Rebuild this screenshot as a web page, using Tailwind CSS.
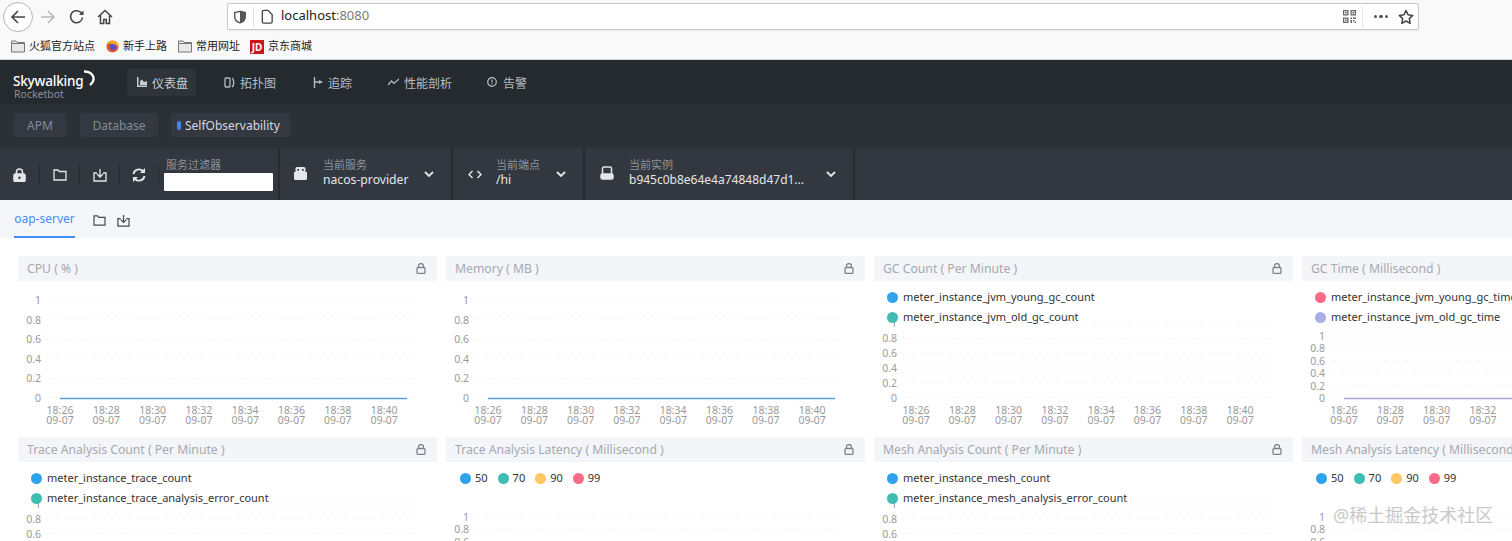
<!DOCTYPE html>
<html lang="en">
<head>
  <meta charset="UTF-8">
  <title>SkyWalking</title>
  <script src="https://cdn.jsdelivr.net/npm/@tailwindcss/browser@4"></script>
</head>
<body class="bg-white h-[541px] overflow-hidden relative font-['Noto_Sans','Noto_Sans_CJK_SC',sans-serif]">

  <!-- browser toolbar -->
  <div class="h-[33px] bg-[#f9f9fa] flex items-center">
    <div class="w-[30px] h-[30px] ml-[3px] rounded-full border border-[#b5b5b5] bg-white flex items-center justify-center text-[#444]">
      <svg class="w-4 h-4" viewBox="0 0 16 16" fill="none" stroke="currentColor" stroke-width="1.6"><path d="M15 8H2M8 2 2 8l6 6"/></svg>
    </div>
    <svg class="w-4 h-4 ml-[7px] text-[#b8b8b8]" viewBox="0 0 16 16" fill="none" stroke="currentColor" stroke-width="1.5"><path d="M1 8h13M8 2l6 6-6 6"/></svg>
    <svg class="w-4 h-4 ml-[13px] text-[#444]" viewBox="0 0 16 16" fill="none" stroke="currentColor" stroke-width="1.6"><path d="M13.5 8.5A6 6 0 1 1 11.5 3.2L14 5.5"/><path d="M14.5 1.5v4.5H10" fill="currentColor" stroke="none"/></svg>
    <svg class="w-4 h-4 ml-[12px] text-[#444]" viewBox="0 0 16 16" fill="none" stroke="currentColor" stroke-width="1.5"><path d="M1 8l7-6.5L15 8M3.5 6.5V14.5h3.2v-4h2.6v4h3.2V6.5"/></svg>
    <div class="ml-[114px] w-[1192px] h-[27px] bg-white border border-[#c8c8c8] rounded-[2px] flex items-center shadow-[0_1px_1px_rgba(0,0,0,0.06)]">
      <svg class="w-[14px] h-[14px] ml-[5px] text-[#555]" viewBox="0 0 16 16" fill="none" stroke="currentColor" stroke-width="1.6"><path d="M8 1.5 2 3v5c0 3.5 2.5 5.5 6 6.8 3.5-1.300 6-3.300 6-6.800V3z"/><path d="M8 1.500V14.800C11.500 13.500 14 11.500 14 8V3z" fill="currentColor" stroke="none"/></svg>
      <div class="w-px h-[20px] bg-[#e2e2e2] ml-[6px]"></div>
      <svg class="w-[14px] h-[15px] ml-[6px] text-[#444]" viewBox="0 0 14 16" fill="none" stroke="currentColor" stroke-width="1.4"><path d="M2 3a1.500 1.500 0 0 1 1.500-1.500H8L12.500 6v7.500A1.500 1.500 0 0 1 11 15H3.500A1.500 1.500 0 0 1 2 13.500z"/></svg>
      <span class="ml-[7px] text-[13px] leading-[18px] pb-[4px] text-[#222]">localhost<span class="text-[#7a7a7a]">:8080</span></span>
      <div class="ml-auto flex items-center">
        <svg class="w-[13px] h-[13px] text-[#666]" viewBox="0 0 13 13" fill="currentColor"><path fill-rule="evenodd" d="M0 0h5.500v5.500H0zM1.200 1.200v3h3v-3zM7.500 0H13v5.500H7.500zM8.700 1.200v3h3v-3zM0 7.500h5.500V13H0zM1.200 8.700v3h3v-3z"/><path d="M2 2h1.500v1.500H2zM9.500 2H11v1.500H9.500zM2 9.500h1.500V11H2zM7.500 7.500H9V9H7.500zM10 7.500h3V9h-3zM7.500 10H9v3H7.500zM10 10h1.500v1.500H10zM11.500 11.500H13V13h-1.500z"/></svg>
        <div class="w-px h-[22px] bg-[#e6e6e6] ml-[6px]"></div>
        <div class="flex gap-[2px] ml-[11px]">
          <span class="w-[3.500px] h-[3.500px] rounded-full bg-[#555]"></span>
          <span class="w-[3.500px] h-[3.500px] rounded-full bg-[#555]"></span>
          <span class="w-[3.500px] h-[3.500px] rounded-full bg-[#555]"></span>
        </div>
        <svg class="w-[16px] h-[16px] ml-[10px] mr-[4px] text-[#444]" viewBox="0 0 16 16" fill="none" stroke="currentColor" stroke-width="1.5" stroke-linejoin="round"><path d="m8 1.500 2 4.300 4.700.600-3.400 3.200.900 4.700L8 12l-4.200 2.300.900-4.700L1.300 6.400 6 5.800z"/></svg>
      </div>
    </div>
  </div>

  <!-- bookmarks -->
  <div class="h-[27px] bg-[#f9f9fa] border-b border-[#d0d0d0] flex items-center text-[11px] text-[#222] pl-[11px] pt-[1px]">
    <svg class="w-[14px] h-[13px] text-[#777]" viewBox="0 0 14 13"><path d="M.5 1h4.500l1.500 1.500h7V12H.5z" fill="#e8e8e8" stroke="currentColor"/><path d="M.5 3.500h13" stroke="currentColor"/></svg>
    <span class="ml-[4px] w-[77px]">火狐官方站点</span>
    <svg class="w-[13px] h-[13px]" viewBox="0 0 14 14"><circle cx="7" cy="7" r="6.500" fill="#e8572a"/><circle cx="7.500" cy="7.500" r="3.600" fill="#5b4bc4"/><path d="M1 4c2-3.500 7-4 10-2 2 1.500 3 4 2.500 6L11 5.500 7 4z" fill="#f9a825"/></svg>
    <span class="ml-[4px] w-[55px]">新手上路</span>
    <svg class="w-[14px] h-[13px] text-[#777]" viewBox="0 0 14 13"><path d="M.5 1h4.500l1.500 1.500h7V12H.5z" fill="#e8e8e8" stroke="currentColor"/><path d="M.5 3.500h13" stroke="currentColor"/></svg>
    <span class="ml-[4px] w-[54px]">常用网址</span>
    <span class="w-[14px] h-[14px] bg-[#c8161d] text-white text-[10px] leading-[14px] text-center font-bold">JD</span>
    <span class="ml-[4px]">京东商城</span>
  </div>

  <!-- app nav -->
  <div class="h-[44px] bg-[#252a2f] flex items-center text-[12px] text-[#b9bdc3]">
    <div class="w-[127px] h-full relative shrink-0">
      <span class="absolute left-[13px] top-[11px] text-[13.500px] leading-[20px] font-medium text-white tracking-[-0.2px]">Skywalking</span>
      <svg class="absolute left-[83px] top-[10px] w-[13px] h-[16px]" viewBox="0 0 13 16" fill="none" stroke="white" stroke-width="2.400"><path d="M1 1.500C7 1 11 5 10.500 10 10 12 9 13.500 7 15"/></svg>
      <span class="absolute left-[14px] top-[27px] text-[10.500px] leading-[14px] text-[#8b9097]">Rocketbot</span>
    </div>
    <div class="w-[69px] h-[27px] bg-[#2f343b] rounded-[3px] flex items-center pl-[10px] text-[#c9ccd1]">
      <svg class="w-[10px] h-[10px]" viewBox="0 0 10 10" fill="currentColor"><path d="M0 0h1.500v8.500H10V10H0zM3 8V4l2-1.500L7 5l3-1v4z"/></svg>
      <span class="ml-[5px] pt-[4px]">仪表盘</span>
    </div>
    <svg class="w-[11px] h-[11px] ml-[28px]" viewBox="0 0 11 11" fill="none" stroke="currentColor" stroke-width="1.300"><rect x="1" y="1" width="5" height="9" rx="1"/><path d="M8 1c2 1 2.500 8 0 9"/></svg>
    <span class="ml-[5px] pt-[4px]">拓扑图</span>
    <svg class="w-[10px] h-[11px] ml-[37px]" viewBox="0 0 10 11" fill="none" stroke="currentColor" stroke-width="1.400"><path d="M1.500 0v11M1.500 5H6"/><path d="M6 3l4 2-4 2z" fill="currentColor" stroke="none"/></svg>
    <span class="ml-[5px] pt-[4px]">追踪</span>
    <svg class="w-[11px] h-[8px] ml-[36px]" viewBox="0 0 11 8" fill="none" stroke="currentColor" stroke-width="1.200"><path d="M0 7l3.500-4 2.500 2.500L11 1"/></svg>
    <span class="ml-[5px] pt-[4px]">性能剖析</span>
    <svg class="w-[10px] h-[10px] ml-[35px]" viewBox="0 0 10 10" fill="none" stroke="currentColor" stroke-width="1.200"><circle cx="5" cy="5" r="4.300"/><path d="M5 2.500v3"/><path d="M5 6.500v1"/></svg>
    <span class="ml-[6px] pt-[4px]">告警</span>
  </div>

  <!-- template tabs -->
  <div class="h-[44px] bg-[#2c3138] flex items-start pt-[9px] pl-[14px] text-[12px]">
    <div class="w-[52px] h-[24px] bg-[#343941] rounded-[3px] flex items-center justify-center pt-[2px] text-[#858b93]">APM</div>
    <div class="w-[78px] h-[24px] bg-[#343941] rounded-[3px] flex items-center justify-center pt-[2px] text-[#858b93] ml-[14px]">Database</div>
    <div class="w-[119px] h-[24px] bg-[#343941] rounded-[3px] flex items-center text-[#d5d8dc] ml-[13px] pl-[4px]">
      <span class="w-[4px] h-[9px] rounded-full bg-[#3d87f5] ml-[2px]"></span>
      <span class="ml-[4px] pt-[2px]">SelfObservability</span>
    </div>
  </div>

  <!-- service toolbar -->
  <div class="h-[52px] bg-[#333840] flex text-[#e4e6e9] text-[12px]">
    <div class="w-[280px] h-full border-r-2 border-[#282c32] flex items-center relative shrink-0">
      <div class="w-[39px] flex justify-center pt-[2px]">
        <svg class="w-[13px] h-[14px]" viewBox="0 0 13 14" fill="none" stroke="currentColor" stroke-width="1.600"><path d="M3.500 6V4a3 3 0 0 1 6 0v2"/><rect x="1" y="6" width="11" height="7.500" rx="1.500" fill="currentColor"/><circle cx="6.500" cy="9.800" r="1.200" fill="#333840" stroke="none"/></svg>
      </div>
      <div class="w-px h-[20px] bg-[#282c32]"></div>
      <div class="w-[39px] flex justify-center pt-[2px]">
        <svg class="w-[14px] h-[12px]" viewBox="0 0 14 12" fill="none" stroke="currentColor" stroke-width="1.300"><path d="M1 1h4l1.200 1.500H13V11H1z"/></svg>
      </div>
      <div class="w-px h-[20px] bg-[#282c32]"></div>
      <div class="w-[39px] flex justify-center pt-[2px]">
        <svg class="w-[14px] h-[14px]" viewBox="0 0 14 14" fill="none" stroke="currentColor" stroke-width="1.300"><path d="M7 1v8M4 6l3 3 3-3M4 5H1v8h12V5h-3"/></svg>
      </div>
      <div class="w-px h-[20px] bg-[#282c32]"></div>
      <div class="w-[38px] flex justify-center pt-[2px]">
        <svg class="w-[14px] h-[14px]" viewBox="0 0 14 14" fill="none" stroke="currentColor" stroke-width="1.900"><path d="M1.500 6A5.500 5.500 0 0 1 11 3.200M12.500 8A5.500 5.500 0 0 1 3 10.800"/><path d="M13 0v5H8zM1 14V9h5z" fill="currentColor" stroke="none"/></svg>
      </div>
      <div class="w-px h-[20px] bg-[#282c32]"></div>
      <div class="ml-[5px]">
        <div class="text-[11px] leading-[15px] text-[#8f949b] pl-[2px]">服务过滤器</div>
        <div class="w-[109px] h-[18px] bg-white rounded-[1px] mt-[1px]"></div>
      </div>
    </div>

    <div class="w-[173px] h-full border-r-2 border-[#282c32] flex items-center shrink-0">
      <div class="w-[43px] flex justify-center pb-[1px] pr-[2px]">
        <svg class="w-[13px] h-[13px]" viewBox="0 0 13 13" fill="currentColor"><path d="M3 0h7a1.500 1.500 0 0 1 1.500 1.500V5H13v6.500a1.500 1.500 0 0 1-1.500 1.500h-10A1.500 1.500 0 0 1 0 11.500V5h1.500V1.500A1.500 1.500 0 0 1 3 0zm.3 2v1.800H5V2zm4.700 0v1.800h1.700V2z" fill-rule="evenodd"/></svg>
      </div>
      <div class="w-[106px] pb-[4px]">
        <div class="text-[11px] leading-[15px] text-[#8f949b]">当前服务</div>
        <div class="text-[12.200px] leading-[15px]">nacos-provider</div>
      </div>
      <svg class="w-[10px] h-[7px] -ml-[5px]" viewBox="0 0 10 7" fill="none" stroke="currentColor" stroke-width="1.800"><path d="m1 1 4 4 4-4"/></svg>
    </div>

    <div class="w-[132px] h-full border-r-2 border-[#282c32] flex items-center shrink-0">
      <div class="w-[43px] flex justify-center">
        <svg class="w-[14px] h-[9px]" viewBox="0 0 14 9" fill="none" stroke="currentColor" stroke-width="1.500"><path d="M4.500 1 1 4.500 4.500 8M9.500 1 13 4.500 9.500 8"/></svg>
      </div>
      <div class="w-[60px] pb-[4px]">
        <div class="text-[11px] leading-[15px] text-[#8f949b]">当前端点</div>
        <div class="text-[12.200px] leading-[15px]">/hi</div>
      </div>
      <svg class="w-[10px] h-[7px]" viewBox="0 0 10 7" fill="none" stroke="currentColor" stroke-width="1.800"><path d="m1 1 4 4 4-4"/></svg>
    </div>

    <div class="w-[270px] h-full border-r-2 border-[#282c32] flex items-center shrink-0">
      <div class="w-[44px] flex justify-center pb-[2px]">
        <svg class="w-[14px] h-[14px]" viewBox="0 0 14 14" fill="none" stroke="currentColor" stroke-width="1.500"><path d="M2.500 8V2.500a1.500 1.500 0 0 1 1.500-1.500h6a1.500 1.500 0 0 1 1.500 1.500V8"/><rect x="1" y="8" width="12" height="5" rx="1.500" fill="currentColor"/></svg>
      </div>
      <div class="w-[195px] pb-[4px]">
        <div class="text-[11px] leading-[15px] text-[#8f949b]">当前实例</div>
        <div class="text-[12px] leading-[15px] whitespace-nowrap">b945c0b8e64e4a74848d47d1...</div>
      </div>
      <svg class="w-[10px] h-[7px] ml-[2px]" viewBox="0 0 10 7" fill="none" stroke="currentColor" stroke-width="1.800"><path d="m1 1 4 4 4-4"/></svg>
    </div>
  </div>

  <!-- dashboard tabs -->
  <div class="h-[38px] bg-[#f5f6fa] flex pl-[14px] text-[12px] text-[#448dfe]">
    <div class="h-full border-b-2 border-[#448dfe] pt-[10px] leading-[18px] w-[61px] text-center">oap-server</div>
    <svg class="w-[13px] h-[11px] ml-[18px] mt-[15px] text-[#444a52]" viewBox="0 0 14 12" fill="none" stroke="currentColor" stroke-width="1.300"><path d="M1 1h4l1.200 1.500H13V11H1z"/></svg>
    <svg class="w-[13px] h-[13px] ml-[11px] mt-[14px] text-[#444a52]" viewBox="0 0 14 14" fill="none" stroke="currentColor" stroke-width="1.300"><path d="M7 1v8M4 6l3 3 3-3M4 5H1v8h12V5h-3"/></svg>
  </div>

  <!-- chart grid -->
  <div id="grid" class="grid grid-cols-[repeat(4,419px)] auto-rows-[181px] gap-x-[9px] pl-[18px] pt-[18px] w-[1800px]"></div>

  <!-- watermark -->
  <div class="absolute left-[1333px] top-[503px] text-[18px] leading-[24px] text-[#c9c9c9] whitespace-nowrap">@稀土掘金技术社区</div>

  <script>
    const BLUE = "#2fa3ec", TEAL = "#3fbdb3", YELLOW = "#ffc75f", RED = "#fb6b85", PURPLE = "#a9afe6";
    const TIMES = ["18:26","18:28","18:30","18:32","18:34","18:36","18:38","18:40"];
    const PCT = [["50",BLUE],["70",TEAL],["90",YELLOW],["99",RED]];

    // top = y of the "1" tick, measured from the card's top edge; "0" always sits at 142
    const charts = [
      { title: "CPU ( % )", top: 44, line: "#5b9fdc" },
      { title: "Memory ( MB )", top: 44, line: "#5b9fdc" },
      { title: "GC Count ( Per Minute )", top: 67, legend: [["meter_instance_jvm_young_gc_count",BLUE],["meter_instance_jvm_old_gc_count",TEAL]] },
      { title: "GC Time ( Millisecond )", top: 80, line: "#a6a6d6", legend: [["meter_instance_jvm_young_gc_time",RED],["meter_instance_jvm_old_gc_time",PURPLE]] },
      { title: "Trace Analysis Count ( Per Minute )", top: 67, legend: [["meter_instance_trace_count",BLUE],["meter_instance_trace_analysis_error_count",TEAL]] },
      { title: "Trace Analysis Latency ( Millisecond )", top: 80, row: PCT },
      { title: "Mesh Analysis Count ( Per Minute )", top: 67, legend: [["meter_instance_mesh_count",BLUE],["meter_instance_mesh_analysis_error_count",TEAL]] },
      { title: "Mesh Analysis Latency ( Millisecond )", top: 80, row: PCT }
    ];

    function chartSvg(c) {
      let s = "";
      const step = (142 - c.top) / 5;
      ["1","0.8","0.6","0.4","0.2","0"].forEach((t, i) => {
        const y = c.top + step * i;
        s += `<line x1="28" x2="398" y1="${y}" y2="${y}" stroke="#f7f7f7" stroke-dasharray="6 3"/>`;
        s += `<text x="23" y="${y + 4}" text-anchor="end" font-size="10.5" fill="#9a9a9a">${t}</text>`;
      });
      TIMES.forEach((t, i) => {
        const x = 42 + 46.3 * i;
        s += `<text x="${x}" y="158" text-anchor="middle" font-size="10.5" fill="#9a9a9a">${t}</text>`;
        s += `<text x="${x}" y="168" text-anchor="middle" font-size="10.5" fill="#9a9a9a">09-07</text>`;
      });
      if (c.line) s += `<line x1="42" x2="389" y1="142.5" y2="142.5" stroke="${c.line}" stroke-width="1.3"/>`;
      return `<svg class="absolute left-0 top-0" width="419" height="181">${s}</svg>`;
    }

    function legendHtml(c) {
      if (c.legend) {
        return `<div class="absolute left-[13px] top-[34px] flex flex-col gap-[6px]">` + c.legend.map(([name, color]) =>
          `<div class="flex items-center h-[14px]"><span class="w-[11px] h-[11px] rounded-full" style="background:${color}"></span><span class="ml-[5px] text-[11px] text-[#333]">${name}</span></div>`
        ).join("") + `</div>`;
      }
      if (c.row) {
        return `<div class="absolute left-[14px] top-[34px] flex gap-[10px]">` + c.row.map(([name, color]) =>
          `<div class="flex items-center h-[14px]"><span class="w-[11px] h-[11px] rounded-full" style="background:${color}"></span><span class="ml-[4px] text-[11px] text-[#333]">${name}</span></div>`
        ).join("") + `</div>`;
      }
      return "";
    }

    const grid = document.getElementById("grid");
    charts.forEach((c) => {
      const card = document.createElement("div");
      card.className = "relative w-[419px] h-[181px]";
      card.innerHTML = chartSvg(c) + legendHtml(c) + `
        <div class="relative h-[25px] bg-[#f4f5f9] flex items-center justify-between pl-[9px] pr-[11px] text-[12.200px] text-[#a4a9b2] whitespace-nowrap">
          <span class="pt-[2px]">${c.title}</span>
          <svg class="w-[10px] h-[11px] text-[#7d838c]" viewBox="0 0 10 11" fill="none" stroke="currentColor" stroke-width="1.300"><path d="M2.500 4.500V3a2.500 2.500 0 0 1 5 0v1.500"/><rect x="1" y="4.500" width="8" height="6" rx="1.200"/></svg>
        </div>`;
      grid.appendChild(card);
    });
  </script>
</body>
</html>
